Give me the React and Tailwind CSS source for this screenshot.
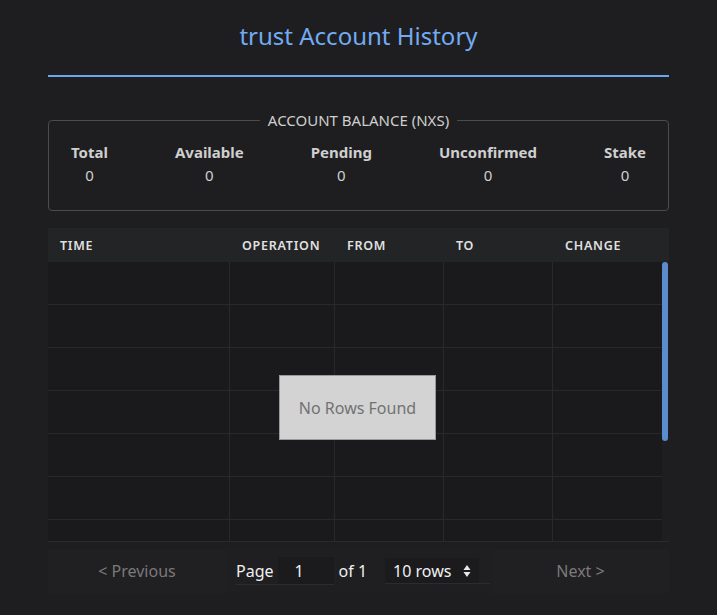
import React from 'react';

const balances = [
  { label: 'Total', value: 0 },
  { label: 'Available', value: 0 },
  { label: 'Pending', value: 0 },
  { label: 'Unconfirmed', value: 0 },
  { label: 'Stake', value: 0 },
];

const columns = [
  { title: 'TIME', width: 'w-[182px]' },
  { title: 'OPERATION', width: 'w-[105px]' },
  { title: 'FROM', width: 'w-[109px]' },
  { title: 'TO', width: 'w-[109px]' },
  { title: 'CHANGE', width: 'flex-1' },
];

const rows = Array.from({ length: 10 });

const App = () => {
  return (
    <div className="min-h-screen bg-[#1e1e20] px-12 font-['Noto_Sans',sans-serif] text-[#d8d8d8]">
      {/* Header */}
      <div className="border-b-2 border-[#6ea6ec] pt-[19px] pb-[22px] text-center">
        <h1 className="text-[24px] leading-[34px] text-[#72abf2]">trust Account History</h1>
      </div>

      {/* Balance */}
      <fieldset className="mt-[33px] rounded border border-[#4b4b4e] px-[22px] pt-[11px] pb-[23px]">
        <legend className="mx-auto px-2 text-[15px] leading-[20px] text-[#cfcfcf]">
          ACCOUNT BALANCE (NXS)
        </legend>
        <div className="flex justify-between">
          {balances.map((b) => (
            <div key={b.label} className="text-center">
              <div className="text-[15px] font-bold leading-[22px] text-[#cfcfcf]">{b.label}</div>
              <div className="text-[15px] leading-[24px] text-[#d0d0d0]">{b.value}</div>
            </div>
          ))}
        </div>
      </fieldset>

      {/* Table */}
      <div className="relative mt-[17px]">
        <div className="flex h-[34px] bg-[#232426] pr-[7px]">
          {columns.map((c) => (
            <div
              key={c.title}
              className={`${c.width} flex items-center pl-3 pt-[2px] text-[12.5px] font-semibold tracking-[0.06em] text-[#e0e0e0]`}
            >
              {c.title}
            </div>
          ))}
        </div>
        <div className="flex h-[280px] overflow-hidden border-b border-[#2a2a2c] bg-[#1a1a1c]">
          <div className="flex-1">
            {rows.map((_, i) => (
              <div key={i} className="flex h-[43px] border-b border-[#29292b]">
                {columns.map((c, j) => (
                  <div
                    key={c.title}
                    className={`${c.width} h-full ${j < columns.length - 1 ? 'border-r border-[#29292b]' : ''}`}
                  />
                ))}
              </div>
            ))}
          </div>
          <div className="w-[7px] bg-[#1e1e20]">
            <div className="h-[179px] w-[6px] rounded-sm bg-[#5b8ccb]" />
          </div>
        </div>

        <div className="absolute left-[231px] top-[147px] flex h-[65px] w-[157px] items-center justify-center border border-[#9a9a9a] bg-[#d3d3d3] text-[16px] text-[#727272]">
          No Rows Found
        </div>

        {/* Pagination */}
        <div className="mt-[7px] flex h-[44px] items-center bg-[#201f22] text-[16px]">
          <div className="flex w-[178px] justify-center text-[#7a7a7a]">&lt; Previous</div>
          <div className="flex h-full flex-1 items-center bg-[#1f1f21] pl-[10px]">
            <div className="flex items-center border-b border-[#2c2c2e]">
              <span className="text-[#f0f0f0]">Page</span>
              <span className="ml-[4px] flex h-[27px] w-[56px] items-center bg-[#1b1b1d] pl-[17px] text-[#f0f0f0]">1</span>
            </div>
            <span className="ml-[5px] text-[#f0f0f0]">of 1</span>
            <div className="ml-[18px] w-[105px] border-b border-[#2c2c2e]">
              <div className="flex h-[25px] w-[94px] items-center justify-between bg-[#1b1b1d] pl-[8px] pr-[8px] text-[#f0f0f0]">
                <span>10 rows</span>
                <svg width="8" height="14" viewBox="0 0 8 14" fill="#e8e8e8">
                  <path d="M4 1 L7.5 6 H0.5 Z" />
                  <path d="M4 13 L7.5 8 H0.5 Z" />
                </svg>
              </div>
            </div>
          </div>
          <div className="flex w-[177px] justify-center text-[#7a7a7a]">Next &gt;</div>
        </div>
      </div>
    </div>
  );
};

export default App;
